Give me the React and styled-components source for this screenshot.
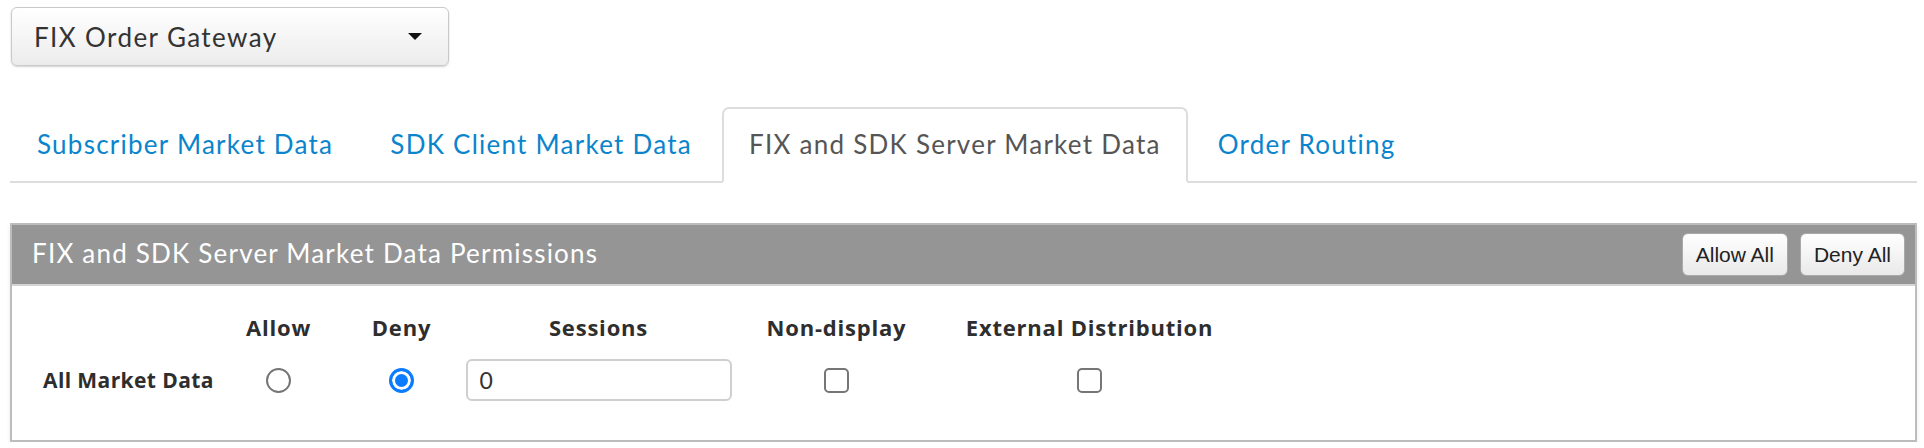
import React, { useState } from "react";
import styled, { createGlobalStyle } from "styled-components";

const GlobalStyle = createGlobalStyle`
  html, body {
    margin: 0;
    padding: 0;
    background: #ffffff;
  }
  body {
    font-family: Lato, "Open Sans", "Liberation Sans", sans-serif;
    color: #333333;
  }
  * { box-sizing: border-box; }
`;

const Page = styled.div`
  padding: 7px 7px 0 10px;
  width: 1924px;
`;

const Select = styled.button`
  margin-left: 1px;
  width: 438px;
  height: 59px;
  display: flex;
  align-items: center;
  justify-content: space-between;
  padding: 0 26px 0 22px;
  border: 1px solid #c9c9c9;
  border-radius: 6px;
  background: linear-gradient(#ffffff, #ececec);
  box-shadow: 0 1px 2px rgba(0, 0, 0, 0.18);
  font-family: Lato, "Open Sans", sans-serif;
  font-size: 26px;
  letter-spacing: 1.4px;
  color: #333333;
  cursor: pointer;
`;

const Caret = styled.span`
  width: 0;
  height: 0;
  border-left: 7px solid transparent;
  border-right: 7px solid transparent;
  border-top: 7px solid #111111;
`;

const TabBar = styled.nav`
  margin-top: 41px;
  display: flex;
  border-bottom: 2px solid #dddddd;
  height: 76px;
`;

const Tab = styled.a`
  display: flex;
  align-items: center;
  height: 76px;
  margin-right: 3px;
  padding: 0 25px 2px;
  border: 2px solid ${(p) => (p.$active ? "#dddddd" : "transparent")};
  border-bottom-color: ${(p) => (p.$active ? "#ffffff" : "transparent")};
  border-radius: 7px 7px 0 0;
  background: ${(p) => (p.$active ? "#ffffff" : "transparent")};
  color: ${(p) => (p.$active ? "#555555" : "#0a84cc")};
  font-size: 26px;
  letter-spacing: 1.25px;
  text-decoration: none;
  cursor: pointer;
  white-space: nowrap;
`;

const Panel = styled.section`
  margin-top: 40px;
  width: 1907px;
  border: 2px solid #bcbcbc;
  box-shadow: 0 4px 5px rgba(0, 0, 0, 0.08);
`;

const PanelHeader = styled.header`
  height: 61px;
  background: #959595;
  border-bottom: 2px solid #d4d4d4;
  display: flex;
  align-items: center;
  justify-content: space-between;
  padding: 0 10px 0 20px;
`;

const PanelTitle = styled.h2`
  margin: 0;
  font-weight: 400;
  font-size: 26px;
  letter-spacing: 1.2px;
  color: #ffffff;
  padding-bottom: 4px;
`;

const ButtonGroup = styled.div`
  display: flex;
  gap: 12px;
  align-self: flex-start;
  margin-top: 8px;
`;

const SmallButton = styled.button`
  height: 43px;
  padding: 0 13px;
  border: 1px solid #a9a9a9;
  border-radius: 6px;
  background: linear-gradient(#ffffff, #e9e9e9);
  font-family: "Liberation Sans", Arial, sans-serif;
  font-size: 21px;
  color: #222222;
  cursor: pointer;
`;

const PanelBody = styled.div`
  padding: 26px 0 31px 31px;
  display: grid;
  grid-template-columns: 174px 123px 123px 271px 205px 301px;
  grid-template-rows: 30px 58px;
  row-gap: 9px;
  align-items: center;
`;

const ColHead = styled.div`
  text-align: center;
  font-family: "Open Sans", Lato, sans-serif;
  font-weight: 700;
  font-size: 22px;
  letter-spacing: 0.8px;
  color: #2e2e2e;
  white-space: nowrap;
`;

const RowLabel = styled.div`
  font-family: "Open Sans", Lato, sans-serif;
  font-weight: 700;
  font-size: 21px;
  letter-spacing: 0.4px;
  color: #2e2e2e;
  white-space: nowrap;
`;

const Cell = styled.div`
  display: flex;
  justify-content: center;
  align-items: center;
`;

const Radio = styled.input.attrs({ type: "radio" })`
  appearance: none;
  margin: 0;
  width: 25px;
  height: 25px;
  border-radius: 50%;
  border: 2px solid #757575;
  background: #ffffff;
  cursor: pointer;
  &:checked {
    border: 3px solid #0a7cff;
    background: #0a7cff;
    box-shadow: inset 0 0 0 3px #ffffff;
  }
`;

const Checkbox = styled.input.attrs({ type: "checkbox" })`
  appearance: none;
  margin: 0;
  width: 25px;
  height: 25px;
  border-radius: 5px;
  border: 2px solid #767676;
  background: #ffffff;
  cursor: pointer;
`;

const TextInput = styled.input`
  width: 266px;
  height: 42px;
  padding: 0 12px;
  border: 2px solid #cfcfcf;
  border-radius: 6px;
  font-family: Lato, "Open Sans", sans-serif;
  font-size: 23px;
  color: #333333;
  outline: none;
`;

const tabs = [
  "Subscriber Market Data",
  "SDK Client Market Data",
  "FIX and SDK Server Market Data",
  "Order Routing",
];

export default function App() {
  const [active, setActive] = useState(2);
  const [perm, setPerm] = useState("deny");
  const [sessions, setSessions] = useState("0");
  const [nonDisplay, setNonDisplay] = useState(false);
  const [external, setExternal] = useState(false);

  return (
    <>
      <GlobalStyle />
      <Page>
        <Select>
          <span>FIX Order Gateway</span>
          <Caret />
        </Select>

        <TabBar>
          {tabs.map((t, i) => (
            <Tab key={t} $active={i === active} onClick={() => setActive(i)}>
              {t}
            </Tab>
          ))}
        </TabBar>

        <Panel>
          <PanelHeader>
            <PanelTitle>FIX and SDK Server Market Data Permissions</PanelTitle>
            <ButtonGroup>
              <SmallButton onClick={() => setPerm("allow")}>Allow All</SmallButton>
              <SmallButton onClick={() => setPerm("deny")}>Deny All</SmallButton>
            </ButtonGroup>
          </PanelHeader>
          <PanelBody>
            <div />
            <ColHead>Allow</ColHead>
            <ColHead>Deny</ColHead>
            <ColHead>Sessions</ColHead>
            <ColHead>Non-display</ColHead>
            <ColHead>External Distribution</ColHead>

            <RowLabel>All Market Data</RowLabel>
            <Cell>
              <Radio
                name="all"
                checked={perm === "allow"}
                onChange={() => setPerm("allow")}
              />
            </Cell>
            <Cell>
              <Radio
                name="all"
                checked={perm === "deny"}
                onChange={() => setPerm("deny")}
              />
            </Cell>
            <Cell>
              <TextInput
                value={sessions}
                onChange={(e) => setSessions(e.target.value)}
              />
            </Cell>
            <Cell>
              <Checkbox
                checked={nonDisplay}
                onChange={(e) => setNonDisplay(e.target.checked)}
              />
            </Cell>
            <Cell>
              <Checkbox
                checked={external}
                onChange={(e) => setExternal(e.target.checked)}
              />
            </Cell>
          </PanelBody>
        </Panel>
      </Page>
    </>
  );
}
